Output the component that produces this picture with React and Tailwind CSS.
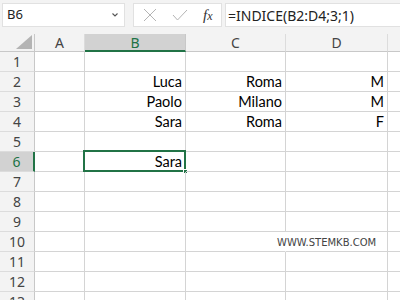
import React from 'react';

const cellFont = { fontFamily: 'Lato, "Open Sans", sans-serif' };

const data = {
  2: ['Luca', 'Roma', 'M'],
  3: ['Paolo', 'Milano', 'M'],
  4: ['Sara', 'Roma', 'F'],
  6: ['Sara', '', ''],
};

function TopBar() {
  return (
    <div className="h-[34px] bg-[#f3f3f3] flex items-start pt-[3px] pl-[2px] gap-0">
      <div className="w-[123px] h-[24px] bg-white border border-[#e1e1e1] flex items-center justify-between pl-[4px] pr-[5px] text-[13px] text-[#222]" style={{ fontFamily: '"Noto Sans", sans-serif' }}>
        <span>B6</span>
        <svg width="8" height="6" viewBox="0 0 8 6">
          <path d="M1.5 1.5 L4 4 L6.5 1.5" fill="none" stroke="#555" strokeWidth="1.1" />
        </svg>
      </div>
      <div className="ml-[8px] w-[89px] h-[24px] bg-white border border-[#e1e1e1] flex items-center">
        <svg width="14" height="14" viewBox="0 0 14 14" className="ml-[9px]">
          <path d="M1 1 L13 13 M13 1 L1 13" stroke="#b4b4b4" strokeWidth="1" />
        </svg>
        <svg width="16" height="12" viewBox="0 0 16 12" className="ml-[15px]">
          <path d="M1 6 L5.5 11 L15 1" fill="none" stroke="#b4b4b4" strokeWidth="1" />
        </svg>
        <span className="ml-[15px] text-[15px] italic text-[#333]" style={{ fontFamily: '"Liberation Serif", serif' }}>
          f<span className="text-[12px]">x</span>
        </span>
      </div>
      <div className="ml-[3px] flex-1 h-[24px] bg-white border border-[#e1e1e1] border-r-0 flex items-center pl-[2px] text-[14px] text-[#222]" style={{ fontFamily: '"Noto Sans", sans-serif' }}>
        =INDICE(B2:D4;3;1)
      </div>
    </div>
  );
}

function HeaderRow() {
  const cols = [
    ['A', 'w-[50px]', false],
    ['B', 'w-[101px]', true],
    ['C', 'w-[100px]', false],
    ['D', 'w-[102px]', false],
  ];
  return (
    <div className="flex h-[18px] bg-[#f3f3f3]" style={{ fontFamily: '"Noto Sans", sans-serif' }}>
      <div className="w-[35px] shrink-0 border-r border-b border-[#c8c8c8] relative">
        <svg width="16" height="14" viewBox="0 0 16 14" className="absolute right-[2px] bottom-[2px]">
          <path d="M16 0 L16 14 L0 14 Z" fill="#b4b4b4" />
        </svg>
      </div>
      {cols.map(([c, w, sel]) => (
        <div
          key={c}
          className={`${w} shrink-0 flex items-center justify-center text-[14px] border-r ${sel ? 'bg-[#d2d2d2] text-[#217346] border-b-2 border-b-[#217346] border-r-[#c8c8c8]' : 'text-[#444] border-b border-b-[#c8c8c8] border-r-[#dcdcdc]'}`}
        >
          {c}
        </div>
      ))}
      <div className="flex-1 border-b border-[#c8c8c8]" />
    </div>
  );
}

function Row({ n }) {
  const vals = data[n] || ['', '', ''];
  const sel = n === 6;
  const border = 'border-r border-b border-[#d4d4d4]';
  return (
    <div className="flex h-[20px]" style={cellFont}>
      <div
        className={`w-[35px] shrink-0 flex items-center justify-center text-[14px] border-b border-b-[#dcdcdc] ${sel ? 'bg-[#d2d2d2] text-[#217346] border-r-2 border-r-[#217346]' : 'bg-[#f3f3f3] text-[#444] border-r border-r-[#c8c8c8]'}`}
        style={{ fontFamily: '"Noto Sans", sans-serif' }}
      >
        {n}
      </div>
      <div className={`w-[50px] shrink-0 ${border}`} />
      <div className={`w-[101px] shrink-0 ${border} relative flex items-center justify-end pr-[3px] text-[14.5px] text-black`}>
        {vals[0]}
        {sel && (
          <div className="absolute left-[-2px] top-[-2px] right-[-1px] bottom-[-1px] border-2 border-[#217346]">
            <div className="absolute right-[-4px] bottom-[-4px] w-[5px] h-[5px] bg-[#217346] border border-white" />
          </div>
        )}
      </div>
      <div className={`w-[100px] shrink-0 border-b border-[#d4d4d4] ${n === 10 ? 'border-r border-r-transparent' : 'border-r'} relative flex items-center justify-end pr-[3px] text-[14.5px] text-black`}>
        {vals[1]}
        {n === 10 && (
          <span className="absolute left-[91px] top-[3px] whitespace-nowrap text-[10px] text-[#444] z-10" style={{ fontFamily: '"DejaVu Sans", sans-serif' }}>
            WWW.STEMKB.COM
          </span>
        )}
      </div>
      <div className={`w-[102px] shrink-0 ${border} flex items-center justify-end pr-[3px] text-[14.5px] text-black`}>
        {vals[2]}
      </div>
      <div className="flex-1 border-b border-[#d4d4d4]" />
    </div>
  );
}

export default function App() {
  return (
    <div className="w-[400px] h-[300px] overflow-hidden bg-white">
      <TopBar />
      <HeaderRow />
      {[1, 2, 3, 4, 5, 6, 7, 8, 9, 10, 11, 12, 13].map((n) => (
        <Row key={n} n={n} />
      ))}
    </div>
  );
}
